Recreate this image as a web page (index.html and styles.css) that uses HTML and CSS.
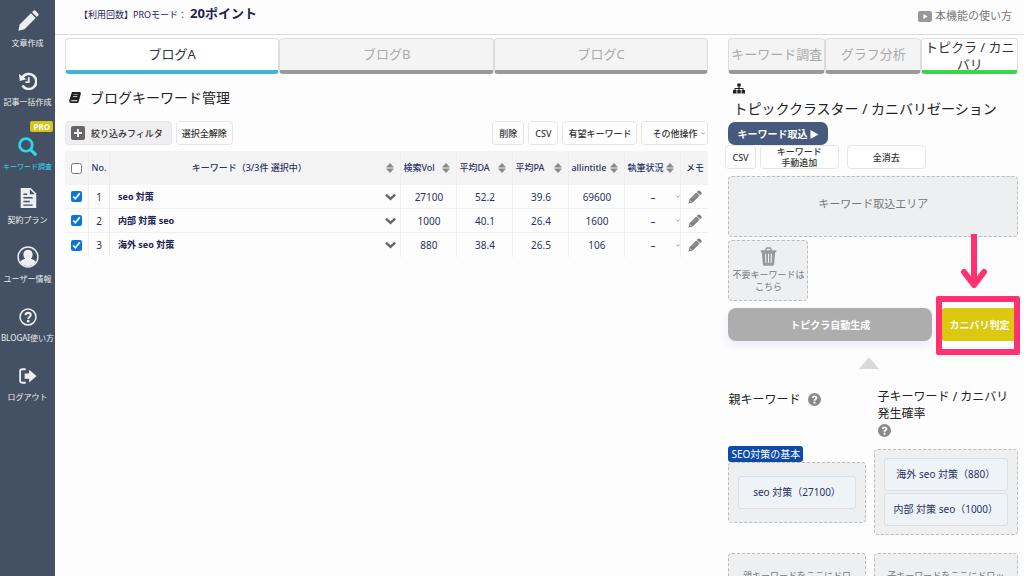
FILE: index.html
```html
<!DOCTYPE html>
<html lang="ja">
<head>
<meta charset="utf-8">
<meta name="viewport" content="width=device-width, initial-scale=1">
<title>ブログキーワード管理</title>
<link rel="stylesheet" href="styles.css">
</head>
<body>
<svg class="defs" aria-hidden="true">
  <symbol id="pencil" viewBox="0 0 24 24"><path d="M1.500 22.500l1.400-6.600L15.200 3.600l5.200 5.200L8.100 21.100zM16.400 2.400l1.500-1.500q1.200-1 2.400 0l2.800 2.800q1 1.200 0 2.400l-1.500 1.500z"/></symbol>
  <symbol id="memo" viewBox="0 0 24 24"><path fill-rule="evenodd" d="M1 23l1.600-7.200L14 4.400l5.600 5.600L8.200 21.400zM4.100 17.600l-.5 1.700 1.100 1.100 1.700-.5zM15 3.400l2.300-2.300q1.400-1.200 2.800 0l2.800 2.800q1.200 1.400 0 2.800L20.600 9z"/><path d="M8 15l6.500-6.500" stroke="#fff" stroke-opacity=".6" stroke-width="1"/></symbol>
  <symbol id="sort" viewBox="0 0 8 10"><path d="M4 0l4 4.400H0zM4 10L0 5.600h8z"/></symbol>
  <symbol id="chevron" viewBox="0 0 12 8"><path d="M1 1.500l5 4.500 5-4.500" fill="none" stroke="currentColor" stroke-width="2.600"/></symbol>
  <symbol id="help" viewBox="0 0 24 24"><path fill-rule="evenodd" d="M12 0a12 12 0 1 0 0 24 12 12 0 0 0 0-24zM7 8.600C7.400 6 9.300 4.500 12.200 4.500c3 0 5.100 1.700 5.100 4.200 0 3.300-3.500 3.500-3.500 5.800h-3.600c0-3.600 3.300-3.800 3.300-5.600 0-.8-.5-1.300-1.400-1.300-1 0-1.600.6-1.900 1.800zM12 15.800a2 2 0 1 1 0 4 2 2 0 0 1 0-4z"/></symbol>
</svg>

<div class="app">
  <nav class="sidebar">
    <a class="nav-item" href="#"><svg class="nav-icon"><use href="#pencil"/></svg><span>文章作成</span></a>
    <a class="nav-item" href="#"><svg class="nav-icon nav-icon-small" viewBox="0 0 24 24"><path d="M4.500 7.500A10 10 0 1 1 4.600 18" fill="none" stroke="currentColor" stroke-width="3.400"/><path d="M0 2.500l1 9.500 9-2.500z"/><path d="M13 7v6.500H8.500" fill="none" stroke="currentColor" stroke-width="2.400"/></svg><span>記事一括作成</span></a>
    <a class="nav-item nav-active" href="#"><b class="pro">PRO</b><svg class="nav-icon nav-icon-small" viewBox="0 0 24 24"><circle cx="10" cy="10" r="8" fill="none" stroke="currentColor" stroke-width="3.400"/><path d="M16 16l7 7" stroke="currentColor" stroke-width="4"/></svg><span>キーワード調査</span></a>
    <a class="nav-item" href="#"><svg class="nav-icon" viewBox="0 0 24 24"><path fill-rule="evenodd" d="M4 1h11l6 6v16H4zM14 2.500V8h5.500zM7 7v1.600h4V7zm0 4v1.600h10V11zm0 4v1.600h7V15zm0 4v1.400h10V19z"/></svg><span>契約プラン</span></a>
    <a class="nav-item" href="#"><svg class="nav-icon" viewBox="0 0 24 24"><circle cx="12" cy="12" r="10.800" fill="none" stroke="currentColor" stroke-width="1.600"/><path d="M12 4a5 5 0 0 1 5 5.300c0 2-.8 3.700-2 4.700 2.400.8 4.600 1.800 5.600 3.300A10 10 0 0 1 12 22a10 10 0 0 1-8.600-4.700C4.400 15.800 6.600 14.800 9 14c-1.200-1-2-2.700-2-4.700A5 5 0 0 1 12 4z"/></svg><span>ユーザー情報</span></a>
    <a class="nav-item" href="#"><svg class="nav-icon nav-icon-small" viewBox="0 0 24 24"><circle cx="12" cy="12" r="10.600" fill="none" stroke="currentColor" stroke-width="2"/><path d="M8.600 9.500c.3-2 1.500-3 3.500-3 2.100 0 3.500 1.100 3.500 2.800 0 2.300-3.200 2.400-3.200 5.200" fill="none" stroke="currentColor" stroke-width="2.800"/><circle cx="12.300" cy="17.500" r="1.800"/></svg><span>BLOGAI使い方</span></a>
    <a class="nav-item" href="#"><svg class="nav-icon nav-icon-small" viewBox="0 0 24 24"><path d="M9 3H4.500Q1.500 3 1.500 6v12q0 3 3 3H9" fill="none" stroke="currentColor" stroke-width="2.400"/><path d="M7.500 8.500h6V3.500L23.500 12l-10 8.500v-5h-6z"/></svg><span>ログアウト</span></a>
  </nav>

  <div class="page">
    <header class="topbar">
      <p class="usage">【利用回数】PROモード：<strong>20ポイント</strong></p>
      <a class="howto" href="#"><svg viewBox="0 0 14 11"><path fill-rule="evenodd" d="M2 0h10q2 0 2 2v7q0 2-2 2H2q-2 0-2-2V2q0-2 2-2zm3.500 3v5L9.500 5.500z"/></svg>本機能の使い方</a>
    </header>

    <div class="content">
      <main class="main">
        <div class="tabs">
          <button class="tab tab-blue">ブログA</button>
          <button class="tab">ブログB</button>
          <button class="tab">ブログC</button>
        </div>
        <h1 class="title"><svg viewBox="0 0 24 22"><path fill-rule="evenodd" d="M7 0h15q2.500 1 1.500 4l-4 15q-.8 3-3 3H3q-3-1-2.500-5L5 2.500Q5.500 0 7 0zm2.200 4.500l-.3 1.200h8.600l.3-1.200zm-1 3.600l-.3 1.200h8.500l.3-1.200zM4.500 16.500q-.8 1.700.4 2h11.200l.6-2z"/></svg>ブログキーワード管理</h1>
        <div class="toolbar">
          <button class="btn btn-filter"><svg viewBox="0 0 14 14"><path fill-rule="evenodd" d="M2 0h10q2 0 2 2v10q0 2-2 2H2q-2 0-2-2V2q0-2 2-2zm4 3v3H3v2h3v3h2V8h3V6H8V3z"/></svg>絞り込みフィルタ</button>
          <button class="btn">選択全解除</button>
          <div class="toolbar-end">
            <button class="btn btn-roomy">削除</button>
            <button class="btn btn-roomy">CSV</button>
            <button class="btn">有望キーワード</button>
            <label class="picker picker-box"><select aria-label="その他操作"><option>その他操作</option></select><svg><use href="#chevron"/></svg></label>
          </div>
        </div>

        <table class="keywords">
          <colgroup><col class="c-check"><col class="c-no"><col><col class="c-num"><col class="c-num"><col class="c-num"><col class="c-num"><col class="c-num"><col class="c-memo"></colgroup>
          <thead>
            <tr>
              <th><input type="checkbox" aria-label="すべて選択"></th>
              <th>No.</th>
              <th><div class="head head-wide"><span>キーワード（3/3件 選択中）</span><svg><use href="#sort"/></svg></div></th>
              <th><div class="head"><span>検索Vol</span><svg><use href="#sort"/></svg></div></th>
              <th><div class="head"><span>平均DA</span><svg><use href="#sort"/></svg></div></th>
              <th><div class="head"><span>平均PA</span><svg><use href="#sort"/></svg></div></th>
              <th><div class="head"><span>allintitle</span><svg><use href="#sort"/></svg></div></th>
              <th><div class="head"><span>執筆状況</span><svg><use href="#sort"/></svg></div></th>
              <th>メモ</th>
            </tr>
          </thead>
          <tbody>
            <tr>
              <td><input type="checkbox" checked aria-label="seo 対策"></td><td>1</td>
              <td><div class="word"><b>seo 対策</b><svg><use href="#chevron"/></svg></div></td>
              <td>27100</td><td>52.2</td><td>39.6</td><td>69600</td>
              <td><label class="picker"><select aria-label="執筆状況"><option>–</option></select><svg><use href="#chevron"/></svg></label></td>
              <td><button class="memo" aria-label="メモ"><svg><use href="#memo"/></svg></button></td>
            </tr>
            <tr>
              <td><input type="checkbox" checked aria-label="内部 対策 seo"></td><td>2</td>
              <td><div class="word"><b>内部 対策 seo</b><svg><use href="#chevron"/></svg></div></td>
              <td>1000</td><td>40.1</td><td>26.4</td><td>1600</td>
              <td><label class="picker"><select aria-label="執筆状況"><option>–</option></select><svg><use href="#chevron"/></svg></label></td>
              <td><button class="memo" aria-label="メモ"><svg><use href="#memo"/></svg></button></td>
            </tr>
            <tr>
              <td><input type="checkbox" checked aria-label="海外 seo 対策"></td><td>3</td>
              <td><div class="word"><b>海外 seo 対策</b><svg><use href="#chevron"/></svg></div></td>
              <td>880</td><td>38.4</td><td>26.5</td><td>106</td>
              <td><label class="picker"><select aria-label="執筆状況"><option>–</option></select><svg><use href="#chevron"/></svg></label></td>
              <td><button class="memo" aria-label="メモ"><svg><use href="#memo"/></svg></button></td>
            </tr>
          </tbody>
        </table>
      </main>

      <aside class="panel">
        <div class="tabs">
          <button class="tab">キーワード調査</button>
          <button class="tab">グラフ分析</button>
          <button class="tab tab-green">トピクラ / カニバリ</button>
        </div>
        <h2 class="panel-title"><svg viewBox="0 0 24 22"><path d="M8.500 1h7v6h-2.300v3H21v4h3v7h-7v-7h2v-2h-5.800v2h2.300v7h-7v-7h2.300v-2H5v2h2v7H0v-7h3v-4h7.800V7H8.500z"/></svg>トピッククラスター / カニバリゼーション</h2>
        <button class="import">キーワード取込 <svg viewBox="0 0 9 10"><path d="M0 0l9 5-9 5z"/></svg></button>
        <div class="actions">
          <button class="btn">CSV</button>
          <button class="btn btn-even">キーワード<br>手動追加</button>
          <button class="btn btn-even btn-clear">全消去</button>
        </div>
        <div class="drop intake">キーワード取込エリア</div>
        <div class="drop trash"><svg viewBox="0 0 24 26"><path fill-rule="evenodd" d="M1 4h6l1-3q.3-1 1.500-1h5q1.200 0 1.500 1l1 3h6v3h-1.500L20 24q-.2 2-2 2H6q-1.800 0-2-2L2.500 7H1zm8.300 0h5.400l-.7-2h-4zM7 9l.8 13h1.400L8.600 9zm4.300 0v13h1.400V9zm4 0l-.6 13h1.500L17 9z"/></svg><span>不要キーワードは<br>こちら</span></div>
        <div class="run">
          <button class="run-auto">トピクラ自動生成</button>
          <div class="marked">
            <button class="run-check">カニバリ判定</button>
            <svg class="arrow" viewBox="0 0 30 56"><path d="M15 0v50" stroke="currentColor" stroke-width="6"/><path d="M5 38l10 13 10-13" fill="none" stroke="currentColor" stroke-width="6" stroke-linejoin="round" stroke-linecap="round"/></svg>
          </div>
        </div>
        <svg class="up" viewBox="0 0 20 12"><path d="M10 0l10 12H0z"/></svg>
        <div class="groups">
          <h3 class="group-title group-parent">親キーワード <svg><use href="#help"/></svg></h3>
          <h3 class="group-title">子キーワード / カニバリ発生確率<br><svg><use href="#help"/></svg></h3>
          <div>
            <span class="topic">SEO対策の基本</span>
            <div class="drop chips chips-parent"><div class="chip">seo 対策（27100）</div></div>
          </div>
          <div class="drop chips chips-child"><div class="chip">海外 seo 対策（880）</div><div class="chip">内部 対策 seo（1000）</div></div>
          <div class="drop empty">親キーワードをここにドロップ</div>
          <div class="drop empty">子キーワードをここにドロップ</div>
        </div>
      </aside>
    </div>
  </div>
</div>
</body>
</html>
```
FILE: styles.css
```css
* { box-sizing: border-box; }
body {
  margin: 0;
  height: 100vh;
  overflow: hidden;
  background: #fdfdfe;
  color: #222;
  font: 10px/14px "Noto Sans", "Noto Sans CJK JP", sans-serif;
}
button, select, input { font: inherit; color: inherit; margin: 0; }
button { padding: 0; border: 0; background: none; cursor: pointer; }
a { color: inherit; text-decoration: none; }
svg { fill: currentColor; flex: none; }
h1, h2, h3, p { margin: 0; font-weight: 400; }
.defs { display: none; }

.app { display: flex; height: 100%; }
.sidebar { flex: none; width: 55px; background: #445164; color: #eceef1; }
.nav-item {
  display: flex;
  flex-direction: column;
  align-items: center;
  height: 59px;
  padding-top: 10px;
  font-size: 8px;
  line-height: 12px;
  white-space: nowrap;
}
.nav-icon { width: 22px; height: 22px; margin-bottom: 5px; }
.nav-icon-small { width: 18px; height: 18px; margin: 3px 0 6px; }
.nav-active { color: #2fd5f2; font-size: 7px; padding-top: 3px; }
.nav-active .nav-icon { width: 19px; height: 19px; margin-top: 5px; margin-bottom: 5px; }
.pro {
  align-self: flex-end;
  margin-right: 2px;
  padding: 0 3px;
  border-radius: 2px;
  background: #d9c414;
  color: #fff;
  font-size: 8px;
  line-height: 11px;
}

.page { flex: 1; min-width: 0; }
.topbar {
  display: flex;
  justify-content: space-between;
  align-items: center;
  height: 35px;
  padding: 0 12px 6px 24px;
  border-bottom: 1px solid #dcdcdc;
  color: #1d2350;
}
.usage { font-size: 9px; line-height: 18px; }
.usage strong { margin-left: 3px; font-size: 13px; }
.howto { display: flex; align-items: center; gap: 3px; padding-top: 4px; color: #777; font-size: 11px; }
.howto svg { width: 14px; height: 11px; fill: #999; }

.content {
  display: grid;
  grid-template-columns: minmax(0, 20fr) minmax(0, 9fr);
  gap: 20px;
  padding: 3px 6px 0 10px;
}

.tabs { display: grid; grid-template-columns: repeat(3, minmax(0, 1fr)); height: 36px; }
.tab {
  overflow: hidden;
  border: 1px solid #ddd;
  border-bottom: 4px solid #999;
  border-radius: 4px;
  background: #f4f4f4;
  color: #aaa;
  font-size: 13px;
  line-height: 17px;
}
.tab-blue { background: #fff; border-bottom-color: #42b4d6; color: #333; }
.tab-green { background: #fff; border-bottom-color: #3bd44f; color: #333; }

.title {
  display: flex;
  align-items: center;
  gap: 9px;
  height: 47px;
  padding: 0 4px;
  font-size: 14px;
}
.title svg { width: 12px; height: 11px; }

.toolbar, .toolbar-end { display: flex; gap: 4px; }
.toolbar-end { margin-left: auto; }
.btn, .picker-box {
  height: 24px;
  padding: 0 5px;
  border: 1px solid #e6e6ea;
  border-radius: 4px;
  background: #fff;
  color: #333;
  font-size: 9px;
  font-weight: 500;
  line-height: 11px;
  white-space: nowrap;
}
.btn-roomy { padding: 0 6px; }
.btn-filter { display: flex; align-items: center; gap: 6px; padding: 0 8px 0 5px; background: #efeff1; }
.btn-filter svg { width: 14px; height: 14px; fill: #666; }

.picker { display: grid; align-items: center; }
.picker select {
  grid-area: 1 / 1;
  width: 100%;
  padding: 0;
  border: 0;
  background: none;
  appearance: none;
  text-align: center;
}
.picker svg { grid-area: 1 / 1; justify-self: end; width: 4px; height: 3px; color: #999; pointer-events: none; }
.picker-box { width: 67px; padding: 0 2px; }

.keywords {
  width: 100%;
  margin-top: 6px;
  border-spacing: 0;
  table-layout: fixed;
  color: #2b3263;
}
.c-check { width: 24px; }
.c-no { width: 21px; }
.c-num { width: 56px; }
.c-memo { width: 27px; }
.keywords th, .keywords td { padding: 0; border-right: 1px solid #eee; text-align: center; }
.keywords th:last-child, .keywords td:last-child { border-right: 0; }
.keywords th { height: 34px; background: #f4f4f5; font-size: 9px; font-weight: 500; white-space: nowrap; }
.keywords td { height: 24px; border-bottom: 1px solid #f0f0f0; }
.keywords tr:last-child td { border-bottom: 0; }
.keywords input {
  display: block;
  width: 11px;
  height: 11px;
  margin: 0 auto;
  accent-color: #0b76d8;
}
.head { display: flex; justify-content: space-between; align-items: center; padding: 0 6px 0 2px; text-align: left; }
.head-wide { text-align: center; }
.head-wide span { flex: 1; }
.head svg { width: 8px; height: 10px; fill: #888; }
.word { display: flex; justify-content: space-between; align-items: center; padding: 0 4px 0 8px; color: #1c2250; font-size: 9px; }
.word svg { width: 11px; height: 8px; color: #666; }
.memo { display: block; margin: 0 auto; color: #808080; }
.memo svg { display: block; width: 14px; height: 14px; }

.panel { display: flex; flex-direction: column; align-items: flex-start; }
.panel > .tabs, .panel > .intake, .run, .groups { align-self: stretch; }
.panel-title { padding: 9px 0 4px 5px; font-size: 14px; line-height: 19px; white-space: nowrap; }
.panel-title svg { display: block; width: 12px; height: 11px; margin-bottom: 5px; }
.import {
  height: 23px;
  padding: 0 9px;
  border-radius: 7px;
  background: #465a7e;
  color: #fff;
  font-weight: 700;
  white-space: nowrap;
}
.import svg { width: 9px; height: 9px; vertical-align: -1px; }
.actions { display: flex; gap: 4px; align-self: stretch; margin-left: -3px; }
.actions .btn { padding: 0 6px; }
.btn-even { width: 79px; }
.btn-clear { margin-left: 4px; }

.drop { border: 1px dashed #bbb; border-radius: 4px; background: #eeeff1; color: #777; text-align: center; }
.intake { height: 61px; margin-top: 7px; padding-top: 20px; font-size: 11px; }
.trash { width: 80px; height: 61px; margin-top: 3px; padding-top: 6px; font-size: 9px; line-height: 12px; }
.trash svg { display: block; width: 17px; height: 19px; margin: 0 auto 3px; fill: #999; }
.run { display: flex; gap: 9px; margin-top: 7px; color: #fff; font-weight: 700; }
.run button { height: 33px; font-weight: 700; }
.run-auto { flex: 1; border-radius: 8px; background: #adadad; box-shadow: 0 4px 10px #e9e9f4; }
.marked { position: relative; width: 77px; }
.marked::after {
  content: "";
  position: absolute;
  inset: -12px -2px -14px -5px;
  border: 6px solid #ff3170;
  border-radius: 2px;
  pointer-events: none;
}
.run-check { width: 100%; border-radius: 4px; background: #dcc80f; }
.arrow { position: absolute; left: 18px; bottom: 51px; width: 30px; height: 56px; color: #ff3170; }
.up { align-self: center; width: 20px; height: 12px; margin: 16px 8px 0 0; fill: #d9d9d9; }

.groups {
  display: grid;
  grid-template-columns: minmax(0, 19fr) minmax(0, 20fr);
  grid-template-rows: 58px 89px auto;
  column-gap: 8px;
  align-items: start;
  margin-top: 19px;
}
.group-title { padding-left: 4px; font-size: 12px; line-height: 17px; }
.group-title svg { width: 13px; height: 13px; margin-left: 4px; vertical-align: -2px; fill: #888; }
.group-title br + svg { margin-left: 0; }
.group-parent { padding: 3px 0 0; }
.topic {
  display: block;
  width: max-content;
  padding: 0 3px;
  border-radius: 3px;
  background: #0e4aa8;
  color: #fff;
  line-height: 16px;
}
.chips { display: grid; gap: 2px; }
.chips-parent { padding: 13px 9px; }
.chips-child { margin-top: 3px; padding: 8px 9px; }
.chip {
  height: 33px;
  border: 1px solid #dcdfe5;
  border-radius: 3px;
  background: #eef3f8;
  color: #2b3263;
  line-height: 31px;
  white-space: nowrap;
}
.empty { height: 61px; margin-top: 18px; padding: 15px 11px; font-size: 9px; word-break: break-all; }
```
